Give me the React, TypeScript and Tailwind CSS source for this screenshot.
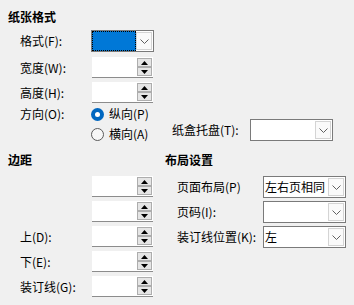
import React from 'react';

const Chevron: React.FC = () => (
  <svg width="9" height="5" viewBox="0 0 9 5" fill="none">
    <polyline points="0.5,0.5 4.5,4.5 8.5,0.5" stroke="#606060" strokeWidth="1" />
  </svg>
);

const Arrow: React.FC<{ up?: boolean }> = ({ up }) => (
  <svg width="7" height="4" viewBox="0 0 7 4">
    {up ? <polygon points="0,4 7,4 3.5,0" fill="#000" /> : <polygon points="0,0 7,0 3.5,4" fill="#000" />}
  </svg>
);

const SpinBox: React.FC = () => (
  <div className="flex h-[21px] w-[61px] bg-white border-b border-[#8c8c8c]">
    <div className="flex-1" />
    <div className="flex w-[15px] flex-col pt-px mr-px">
      <div className="flex h-[9px] items-center justify-center border border-[#adadad] bg-[#e5e5e5]">
        <Arrow up />
      </div>
      <div className="flex h-[9px] items-center justify-center border border-[#adadad] bg-[#e5e5e5]">
        <Arrow />
      </div>
    </div>
  </div>
);

const ComboBox: React.FC<{ value?: string; width: string; focused?: boolean }> = ({ value, width, focused }) => (
  <div className={`flex h-[22px] ${width} border border-[#7a7a7a] bg-white`}>
    {focused ? (
      <div className="flex-1 bg-[#0078d7] outline-1 outline-dotted outline-black -outline-offset-1" />
    ) : (
      <div className="flex-1 pl-px leading-[20px] overflow-hidden whitespace-nowrap">{value}</div>
    )}
    <div className="my-px mr-px flex w-[16px] items-center justify-center border border-[#d4d4d4] bg-[#fafafa]">
      <Chevron />
    </div>
  </div>
);

const Radio: React.FC<{ checked?: boolean; label: string }> = ({ checked, label }) => (
  <div className="flex h-[16px] items-center">
    {checked ? (
      <div className="flex h-[13px] w-[13px] items-center justify-center rounded-full bg-[#0067c0]">
        <div className="h-[5px] w-[5px] rounded-full bg-white" />
      </div>
    ) : (
      <div className="h-[13px] w-[13px] rounded-full border border-[#5a5a5a] bg-[#f7f7f7]" />
    )}
    <span className="ml-[5px] leading-[16px]">{label}</span>
  </div>
);

const SpinRow: React.FC<{ label?: string }> = ({ label }) => (
  <div className="flex items-center pl-[20px]">
    <span className="w-[72px] leading-[16px]">{label}</span>
    <SpinBox />
  </div>
);

const LayoutRow: React.FC<{ label: string; value?: string }> = ({ label, value }) => (
  <div className="flex items-center pl-[12px]">
    <span className="w-[86px] leading-[16px] whitespace-nowrap">{label}</span>
    <ComboBox width="w-[83px]" value={value} />
  </div>
);

export default function App() {
  return (
    <div
      className="h-[305px] w-[354px] overflow-hidden bg-[#f0f0f0] text-[12px] text-black"
      style={{ fontFamily: '"Noto Sans CJK SC", "Noto Sans", sans-serif' }}
    >
      <div className="ml-[8px] mt-[9px] h-[16px] font-bold leading-[16px]">纸张格式</div>

      <div className="mt-[5px] flex items-center pl-[20px]">
        <span className="w-[71px] leading-[16px]">格式(F):</span>
        <ComboBox width="w-[63px]" focused />
      </div>

      <div className="mt-[5px]">
        <SpinRow label="宽度(W):" />
      </div>
      <div className="mt-[4px]">
        <SpinRow label="高度(H):" />
      </div>

      <div className="mt-[3px] flex items-end pl-[20px]">
        <span className="w-[71px] self-start leading-[16px]">方向(O):</span>
        <div className="flex w-[81px] flex-col gap-[4px]">
          <Radio checked label="纵向(P)" />
          <Radio label="横向(A)" />
        </div>
        <div className="mb-px flex items-center">
          <span className="w-[78px] leading-[16px] whitespace-nowrap">纸盒托盘(T):</span>
          <ComboBox width="w-[83px]" />
        </div>
      </div>

      <div className="mt-[10px] flex">
        <div className="w-[165px]">
          <div className="ml-[8px] h-[16px] font-bold leading-[16px]">边距</div>
          <div className="mt-[8px] flex flex-col gap-[4px]">
            <SpinRow />
            <SpinRow />
            <SpinRow label="上(D):" />
            <SpinRow label="下(E):" />
            <SpinRow label="装订线(G):" />
          </div>
        </div>
        <div className="flex-1">
          <div className="h-[16px] font-bold leading-[16px]">布局设置</div>
          <div className="mt-[8px] flex flex-col gap-[3px]">
            <LayoutRow label="页面布局(P)" value="左右页相同" />
            <LayoutRow label="页码(I):" />
            <LayoutRow label="装订线位置(K):" value="左" />
          </div>
        </div>
      </div>
    </div>
  );
}
